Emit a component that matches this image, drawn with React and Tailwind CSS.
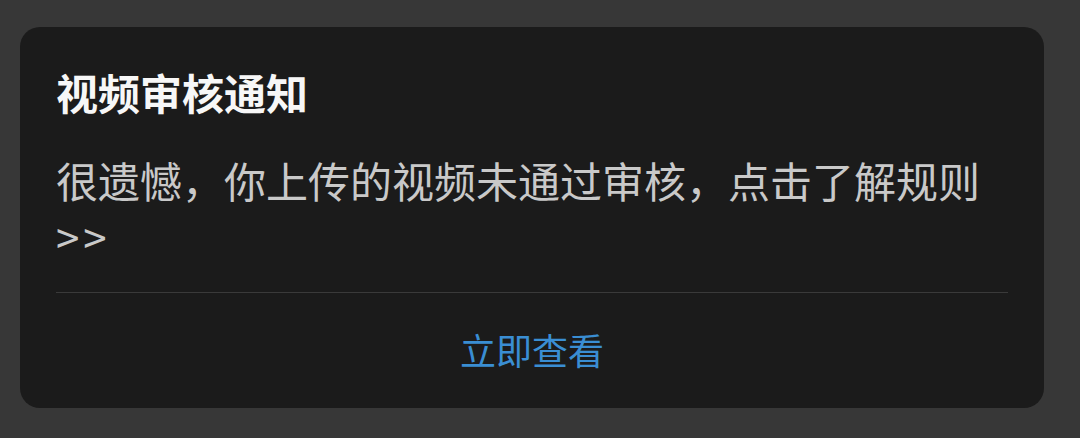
import React from 'react';

const cjk = { fontFamily: '"Noto Sans CJK SC", "Noto Sans", sans-serif' };

const App = () => {
  return (
    <div className="w-[1080px] h-[438px] bg-[#373737] pl-5 pt-[27px]" style={cjk}>
      <div className="w-[1024px] h-[381px] bg-[#1b1b1b] rounded-[20px] flex flex-col">
        <div className="px-9 pt-[37px]">
          <h1 className="text-[42px] leading-[56px] font-bold text-[#f7f7f7]">视频审核通知</h1>
          <p className="mt-8 text-[42px] leading-[56px] text-[#c9c9c9]">
            很遗憾，你上传的视频未通过审核，点击了解规则 <span className="tracking-[4px]">&gt;&gt;</span>
          </p>
        </div>
        <div className="mx-9 mt-[28px] h-px bg-[#3a3a3a]" />
        <button className="flex-1 flex items-center justify-center pb-1 text-[36px] text-[#3a8ed3]">
          立即查看
        </button>
      </div>
    </div>
  );
};

export default App;
